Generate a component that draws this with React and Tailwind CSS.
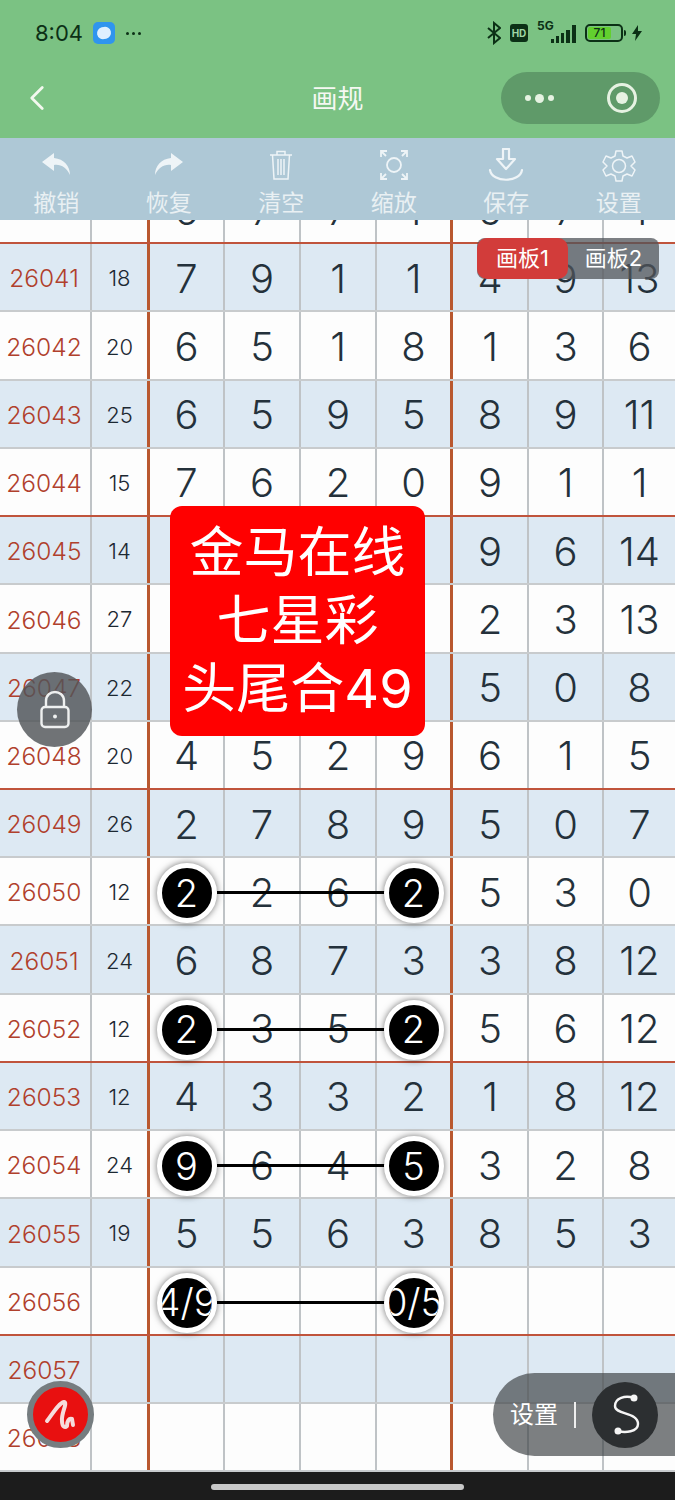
import { ChevronLeft } from "lucide-react";

const rows = [
  { id: "26040", sum: "", nums: ["6", "7", "7", "1"], rest: ["5", "7", "1"] },
  { id: "26041", sum: "18", nums: ["7", "9", "1", "1"], rest: ["4", "9", "13"] },
  { id: "26042", sum: "20", nums: ["6", "5", "1", "8"], rest: ["1", "3", "6"] },
  { id: "26043", sum: "25", nums: ["6", "5", "9", "5"], rest: ["8", "9", "11"] },
  { id: "26044", sum: "15", nums: ["7", "6", "2", "0"], rest: ["9", "1", "1"] },
  { id: "26045", sum: "14", nums: ["", "", "", ""], rest: ["9", "6", "14"] },
  { id: "26046", sum: "27", nums: ["", "", "", ""], rest: ["2", "3", "13"] },
  { id: "26047", sum: "22", nums: ["", "", "", ""], rest: ["5", "0", "8"] },
  { id: "26048", sum: "20", nums: ["4", "5", "2", "9"], rest: ["6", "1", "5"] },
  { id: "26049", sum: "26", nums: ["2", "7", "8", "9"], rest: ["5", "0", "7"] },
  { id: "26050", sum: "12", nums: ["2", "2", "6", "2"], rest: ["5", "3", "0"], marked: true },
  { id: "26051", sum: "24", nums: ["6", "8", "7", "3"], rest: ["3", "8", "12"] },
  { id: "26052", sum: "12", nums: ["2", "3", "5", "2"], rest: ["5", "6", "12"], marked: true },
  { id: "26053", sum: "12", nums: ["4", "3", "3", "2"], rest: ["1", "8", "12"] },
  { id: "26054", sum: "24", nums: ["9", "6", "4", "5"], rest: ["3", "2", "8"], marked: true },
  { id: "26055", sum: "19", nums: ["5", "5", "6", "3"], rest: ["8", "5", "3"] },
  { id: "26056", sum: "", nums: ["4/9", "", "", "0/5"], rest: ["", "", ""], marked: true },
  { id: "26057", sum: "", nums: ["", "", "", ""], rest: ["", "", ""] },
  { id: "26058", sum: "", nums: ["", "", "", ""], rest: ["", "", ""] },
];

const numCols = ["w-[75px]", "w-[76px]", "w-[76px]", "w-[76px]"];
const restCols = ["w-[76px]", "w-[75px]", "flex-1"];

function Circle({ text }) {
  return (
    <div className="relative z-10 mt-[1px] flex h-[60px] w-[60px] items-center justify-center overflow-hidden rounded-full border-[5px] border-white bg-black text-[38px] text-white shadow-[0_0_7px_rgba(0,0,0,0.55)]">
      <span className="whitespace-nowrap">{text}</span>
    </div>
  );
}

function Row({ row, index }) {
  const blue = index % 2 === 1;
  const redLine = index % 4 === 0;
  return (
    <div
      className={`relative flex h-[68.22px] border-b-2 ${blue ? "bg-[#dde9f3]" : "bg-[#fdfdfd]"} ${redLine ? "border-[#c0543c]" : "border-[#c8cbcd]"}`}
    >
      <div className="flex w-[92px] items-center justify-center border-r-2 border-[#bfc3c6] pr-[2px] pt-[3px] text-[24.5px] font-light text-[#b0402c]">
        {row.id}
      </div>
      <div className="flex w-[58px] items-center justify-center border-r-[3px] border-[#b9582f] pt-[3px] text-[22px] font-light text-[#1c2832]">
        {row.sum}
      </div>
      {row.nums.map((n, i) => (
        <div
          key={i}
          className={`flex items-center justify-center pt-[3px] text-[40px] font-light text-[#24313b] ${numCols[i]} ${i === 3 ? "border-r-[3px] border-[#b9582f]" : "border-r-2 border-[#bfc3c6]"}`}
        >
          {row.marked && (i === 0 || i === 3) ? <Circle text={n} /> : n}
        </div>
      ))}
      {row.rest.map((n, i) => (
        <div
          key={i}
          className={`flex items-center justify-center pt-[3px] text-[40px] font-light text-[#24313b] ${restCols[i]} ${i < 2 ? "border-r-2 border-[#bfc3c6]" : ""}`}
        >
          {n}
        </div>
      ))}
      {row.marked && <div className="absolute left-[217px] top-[33px] h-[3px] w-[170px] bg-black" />}
    </div>
  );
}

function ToolIcon({ name }) {
  const common = "h-[36px] w-[36px] text-[#eef4f7]";
  if (name === "undo")
    return (
      <svg viewBox="0 0 36 36" className={common} fill="currentColor">
        <path d="M16 5 L4 14 L16 23 L16 17 C23 16 29 20 32 27 C32 18 26 11 16 10 Z" />
      </svg>
    );
  if (name === "redo")
    return (
      <svg viewBox="0 0 36 36" className={common} fill="currentColor">
        <path d="M20 5 L32 14 L20 23 L20 17 C13 16 7 20 4 27 C4 18 10 11 20 10 Z" />
      </svg>
    );
  if (name === "trash")
    return (
      <svg viewBox="0 0 36 36" className={common} fill="none" stroke="currentColor" strokeWidth="1.5">
        <path d="M7 7 H29 M14 7 V3.5 H22 V7 M9.5 7 L11 31 H25 L26.5 7 M15 11 V27 M18 11 V27 M21 11 V27" />
      </svg>
    );
  if (name === "zoom")
    return (
      <svg viewBox="0 0 36 36" className={common} fill="none" stroke="currentColor" strokeWidth="1.8">
        <circle cx="18" cy="17" r="7" />
        <path d="M5 9 V3 H11 M5 3 L10 8 M25 3 H31 V9 M31 3 L26 8 M5 25 V31 H11 M5 31 L10 26 M31 25 V31 H25 M31 31 L26 26" />
      </svg>
    );
  if (name === "save")
    return (
      <svg viewBox="0 0 36 36" className={common} fill="none" stroke="currentColor" strokeWidth="2.2" strokeLinejoin="round">
        <path d="M15 1 H21 V11 H27 L18 21 L9 11 H15 Z" />
        <path d="M2 22 C4 35 32 35 34 22" strokeLinecap="round" />
      </svg>
    );
  return (
    <svg viewBox="0 0 36 36" className={common} fill="none" stroke="currentColor" strokeWidth="1.5" strokeLinejoin="round">
      <path d="M15 3 H21 L22 8 L26 10 L31 8 L34 14 L30 18 L34 22 L31 28 L26 26 L22 28 L21 33 H15 L14 28 L10 26 L5 28 L2 22 L6 18 L2 14 L5 8 L10 10 L14 8 Z" />
      <circle cx="18" cy="18" r="6.5" />
    </svg>
  );
}

const tools = [
  { name: "undo", label: "撤销" },
  { name: "redo", label: "恢复" },
  { name: "trash", label: "清空" },
  { name: "zoom", label: "缩放" },
  { name: "save", label: "保存" },
  { name: "gear", label: "设置" },
];

function StatusBar() {
  return (
    <div className="flex h-[66px] items-center justify-between pl-[35px] pr-[33px] text-[#0c3016]">
      <div className="flex items-center">
        <span className="text-[22px] leading-none">8:04</span>
        <div className="ml-[10px] flex h-[22px] w-[22px] items-center justify-center rounded-[5px] bg-[#2f95ee]">
          <div className="h-[12px] w-[14px] -rotate-12 rounded-full bg-[#dff0ff]" />
        </div>
        <div className="ml-[11px] flex gap-[3px]">
          <div className="h-[3px] w-[3px] rounded-full bg-[#0c3016]" />
          <div className="h-[3px] w-[3px] rounded-full bg-[#0c3016]" />
          <div className="h-[3px] w-[3px] rounded-full bg-[#0c3016]" />
        </div>
      </div>
      <div className="flex items-center">
        <svg viewBox="0 0 14 24" className="h-[24px] w-[14px]" fill="none" stroke="currentColor" strokeWidth="2">
          <path d="M1 7 L13 17 L7 22 V2 L13 7 L1 17" />
        </svg>
        <div className="ml-[9px] flex h-[18px] w-[18px] items-center justify-center rounded-[3px] bg-[#0c3016] text-[10px] font-bold leading-none text-[#9fd6a5]">
          HD
        </div>
        <div className="relative ml-[9px] h-[20px] w-[39px]">
          <span className="absolute left-0 top-[-4px] text-[12px] font-bold leading-[14px]">5G</span>
          <div className="absolute bottom-0 right-0 flex items-end gap-[2px]">
            <div className="h-[4px] w-[3px] bg-[#0c3016]" />
            <div className="h-[7px] w-[3px] bg-[#0c3016]" />
            <div className="h-[10px] w-[3px] bg-[#0c3016]" />
            <div className="h-[13px] w-[4px] bg-[#0c3016]" />
            <div className="h-[18px] w-[4px] bg-[#0c3016]" />
          </div>
        </div>
        <div className="ml-[9px] flex h-[18px] w-[38px] items-center rounded-[5px] border-2 border-[#0c3016] p-[1px]">
          <div className="flex h-full w-[72%] items-center justify-center rounded-[2px] bg-[#62d02e] text-[12px] font-medium leading-none">
            71
          </div>
        </div>
        <div className="ml-[1px] h-[6px] w-[2px] rounded-r bg-[#0c3016]" />
        <svg viewBox="0 0 10 16" className="ml-[6px] h-[16px] w-[10px]" fill="currentColor">
          <path d="M6 0 L0 9 H4 L3 16 L10 6 H6 Z" />
        </svg>
      </div>
    </div>
  );
}

export default function App() {
  return (
    <div className="relative h-[1500px] w-[675px] overflow-hidden bg-[#1c1c1c] font-['Inter','Noto_Sans_CJK_SC',sans-serif]">
      <div className="h-[138px] bg-[#7bc283]">
        <StatusBar />
        <div className="relative flex h-[64px] items-center justify-between pl-[16px] pr-[15px]">
          <ChevronLeft size={42} strokeWidth={1.6} className="text-[#f3f8ef]" />
          <span className="absolute left-0 right-0 text-center text-[26px] text-[#f5f8f2]">画规</span>
          <div className="flex h-[52px] w-[159px] items-center justify-between rounded-full bg-[#5f9a69] pl-[24px] pr-[23px]">
            <div className="flex items-center gap-[4px]">
              <div className="h-[6px] w-[6px] rounded-full bg-[#e6f2e2]" />
              <div className="h-[9px] w-[9px] rounded-full bg-[#e6f2e2]" />
              <div className="h-[6px] w-[6px] rounded-full bg-[#e6f2e2]" />
            </div>
            <div className="flex h-[30px] w-[30px] items-center justify-center rounded-full border-[3px] border-[#e6f2e2]">
              <div className="h-[12px] w-[12px] rounded-full bg-[#e6f2e2]" />
            </div>
          </div>
        </div>
      </div>

      <div className="relative z-20 grid h-[82px] grid-cols-6 bg-[#aec8d6]">
        {tools.map((t) => (
          <div key={t.name} className="flex flex-col items-center pt-[10px]">
            <ToolIcon name={t.name} />
            <span className="mt-[4px] text-[23px] leading-[30px] text-[#e9f0f3]">{t.label}</span>
          </div>
        ))}
      </div>

      <div className="h-[1253px] overflow-hidden">
        <div className="-mt-[44px]">
          {rows.map((row, i) => (
            <Row key={row.id} row={row} index={i} />
          ))}
        </div>
      </div>

      <div className="flex h-[27px] items-center justify-center">
        <div className="h-[6px] w-[253px] rounded-full bg-[#c8c8c8]" />
      </div>

      {/* floating pieces */}
      <div className="absolute left-[477px] top-[238px] z-30 flex h-[41px] w-[182px] rounded-[8px] bg-[rgba(80,84,90,0.75)] text-[22px] text-white">
        <div className="flex w-[91px] items-center justify-center rounded-[10px] bg-[#d23c3a]">画板1</div>
        <div className="flex flex-1 items-center justify-center">画板2</div>
      </div>

      <div className="absolute left-[170px] top-[506px] z-30 flex h-[230px] w-[255px] flex-col items-center justify-center rounded-[12px] bg-[#ff0000] text-[54px] leading-[68px] text-white">
        <span>金马在线</span>
        <span>七星彩</span>
        <span>头尾合49</span>
      </div>

      <div className="absolute left-[17px] top-[672px] z-30 flex h-[75px] w-[75px] items-center justify-center rounded-full bg-[rgba(80,84,88,0.82)]">
        <svg viewBox="0 0 32 40" className="h-[40px] w-[32px]" fill="none" stroke="#eef0f0" strokeWidth="2.4">
          <path d="M7 17 V11 C7 -1 25 -1 25 11 V17" />
          <rect x="2.5" y="17" width="27" height="20" rx="3.5" />
          <circle cx="16" cy="26.5" r="2" fill="#eef0f0" stroke="none" />
        </svg>
      </div>

      <div className="absolute left-[27px] top-[1381px] z-30 flex h-[67px] w-[67px] items-center justify-center rounded-full border-[6px] border-[#767d80] bg-[#e81010]">
        <svg viewBox="0 0 40 40" className="h-[40px] w-[40px]" fill="none" stroke="#f6dcdc" strokeWidth="4" strokeLinecap="round" strokeLinejoin="round">
          <path d="M6 26 C12 18 18 8 23 7 C27 8 20 18 21 26 C21 32 24 33 26 31 C26 26 28 23 31 24 L32 30" />
        </svg>
      </div>

      <div className="absolute left-[493px] top-[1373px] z-30 flex h-[83px] w-[182px] items-center rounded-l-[42px] bg-[rgba(62,66,70,0.68)] pl-[17px] text-white">
        <span className="text-[24px]">设置</span>
        <div className="ml-[16px] h-[26px] w-[2px] bg-[#eeeeee]" />
        <div className="ml-[16px] flex h-[66px] w-[66px] items-center justify-center rounded-full bg-[#2c2f31]">
          <svg viewBox="0 0 40 48" className="h-[48px] w-[40px]" fill="none" stroke="#f5f5f5" strokeWidth="2.4" strokeLinecap="round">
            <path d="M29 7 C20 4 10 7 10 15 C10 24 33 21 33 33 C33 41 20 42 13 40" />
            <circle cx="29" cy="7" r="3.5" fill="#f5f5f5" stroke="none" />
            <circle cx="13" cy="40" r="3.5" fill="#f5f5f5" stroke="none" />
          </svg>
        </div>
      </div>
    </div>
  );
}
